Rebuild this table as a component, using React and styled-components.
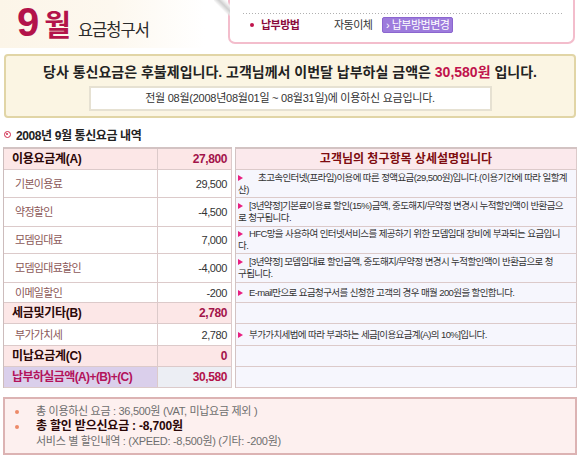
import React from 'react';
import styled, { createGlobalStyle } from 'styled-components';

const FONT = `"Liberation Sans", "Noto Sans CJK KR", sans-serif`;
const CRIMSON = '#b3134a';

const Global = createGlobalStyle`
  html, body { margin: 0; padding: 0; background: #fff; }
  body { font-family: ${FONT}; color: #333; }
  * { box-sizing: border-box; }
`;

const Page = styled.div`
  width: 580px;
  height: 460px;
  overflow: hidden;
`;

const TopBar = styled.header`
  display: flex;
  justify-content: space-between;
  align-items: flex-start;
  height: 48px;
`;

const TitleArea = styled.div`
  width: 205px;
  height: 48px;
  padding: 2px 0 0 17px;
  display: flex;
  align-items: baseline;
  background: linear-gradient(to right, #fcf5e8 0%, #fdf8ef 55%, #ffffff 100%);
`;

const MonthNum = styled.span`
  font-family: "Liberation Sans", sans-serif;
  font-weight: 700;
  font-size: 40px;
  line-height: 40px;
  color: ${CRIMSON};
`;

const MonthWord = styled.span`
  font-family: "Noto Sans CJK KR", sans-serif;
  font-weight: 700;
  font-size: 29px;
  line-height: 40px;
  color: ${CRIMSON};
  margin-left: 5px;
  letter-spacing: -1px;
`;

const TitleWord = styled.span`
  font-family: "Noto Sans CJK KR", sans-serif;
  font-size: 16.5px;
  line-height: 40px;
  color: #2a2a2a;
  margin-left: 8px;
  letter-spacing: -1px;
`;

const Card = styled.div`
  position: relative;
  width: 347px;
  height: 44px;
  margin-right: 5px;
  border: 2px solid #f3bdcc;
  border-top: none;
  border-radius: 0 0 7px 7px;
  background: #fff;
  padding: 13px 11px 0 13px;

  &::before {
    content: '';
    position: absolute;
    left: -16px;
    top: 0;
    width: 16px;
    height: 16px;
    background: linear-gradient(45deg, transparent 45%, #e6e6e6 55%, #cfcfcf 65%, #f2f2f2 80%, transparent 90%);
  }
`;

const DottedRule = styled.div`
  height: 1px;
  background: repeating-linear-gradient(to right, #b0b0b0 0 1px, transparent 1px 3px);
`;

const PayRow = styled.div`
  display: flex;
  align-items: center;
  height: 16px;
  margin-top: 3px;
  padding-left: 7px;
`;

const Dot = styled.span`
  width: 4px;
  height: 4px;
  border-radius: 50%;
  background: ${(p) => p.$color};
  flex: none;
`;

const PayLabel = styled.span`
  width: 73px;
  margin-left: 7px;
  font-size: 11px;
  font-weight: 700;
  letter-spacing: -0.5px;
  color: #8a0b3b;
  line-height: 16px;
`;

const PayValue = styled.span`
  width: 48px;
  font-size: 11px;
  letter-spacing: -0.5px;
  color: #333;
  line-height: 16px;
`;

const PayButton = styled.button`
  height: 16px;
  padding: 0 3px;
  border: 1px solid #8b66cf;
  border-radius: 2px;
  background: #9d7bdc;
  color: #fff;
  font-family: ${FONT};
  font-size: 11px;
  letter-spacing: -0.5px;
  line-height: 14px;
  cursor: pointer;
`;

const Notice = styled.section`
  margin: 6px 4px 0;
  border: 2px solid #e1d5a6;
  border-radius: 4px;
  background: #fbf5e3;
  padding: 6px 0 5px;
  text-align: center;
`;

const NoticeMain = styled.p`
  margin: 0;
  font-size: 14px;
  font-weight: 700;
  line-height: 20px;
  letter-spacing: 0;
  color: #222;
`;

const Amount = styled.span`
  color: #c0134c;
`;

const NoticeSub = styled.p`
  width: 403px;
  height: 25px;
  margin: 4px auto 0;
  border: 2px solid #e6e1d2;
  background: #fff;
  font-size: 11px;
  line-height: 21px;
  letter-spacing: -0.25px;
  color: #333;
`;

const SectionTitle = styled.h2`
  display: flex;
  align-items: center;
  height: 16px;
  margin: 8px 0 5px 4px;
  font-size: 12px;
  font-weight: 700;
  letter-spacing: -0.4px;
  color: #222;
`;

const TitleIcon = styled.span`
  position: relative;
  width: 7px;
  height: 7px;
  border: 1.5px solid #d12a4c;
  border-radius: 50%;
  margin-right: 5px;
  flex: none;

  &::after {
    content: '';
    position: absolute;
    left: 1px;
    top: 1px;
    width: 2px;
    height: 2px;
    border-radius: 50%;
    background: #d12a4c;
  }
`;

const Tables = styled.div`
  display: flex;
  gap: 3px;
  margin: 0 3px;
`;

const ROWS = '21px 28px 29px 27px 29px 20px 21px 22px 21px 21px';

const AmountGrid = styled.div`
  display: grid;
  grid-template-columns: 154px 74px;
  grid-template-rows: ${ROWS};
  border-top: 2px solid #d3c3c3;
  border-left: 1px solid #cdbcbc;
`;

const DescGrid = styled.div`
  flex: 1;
  display: grid;
  grid-template-columns: 1fr;
  grid-template-rows: ${ROWS};
  border-top: 2px solid #d3c3c3;
  border-left: 1px solid #d3c3c3;
`;

const labelStyles = {
  sum: `background:#fce7e7; color:#2c0808; font-size:12px; font-weight:700; padding-left:8px; letter-spacing:-0.3px;`,
  item: `background:#fff; color:#8c5858; font-size:11px; padding-left:11px; letter-spacing:-0.7px;`,
  total: `background:#dacfeb; color:#b3125a; font-size:12px; font-weight:700; padding-left:8px; letter-spacing:-0.6px;`,
};

const valueStyles = {
  sum: `background:#fce7e7; color:#a3144a; font-size:12px; font-weight:700;`,
  item: `background:#fff; color:#333; font-size:11px;`,
  total: `background:#eceef4; color:#b3124a; font-size:12px; font-weight:700;`,
};

const Cell = styled.div`
  display: flex;
  align-items: center;
  border-right: 1px solid #dccaca;
  border-bottom: 1px solid #dccaca;
  line-height: 14px;
  white-space: nowrap;
  overflow: hidden;
`;

const LabelCell = styled(Cell)`
  ${(p) => labelStyles[p.$kind]}
`;

const ValueCell = styled(Cell)`
  justify-content: flex-end;
  padding-right: 4px;
  letter-spacing: -0.4px;
  ${(p) => valueStyles[p.$kind]}
`;

const DescHead = styled(Cell)`
  justify-content: center;
  background: #fbe9ec;
  color: #7e0c10;
  font-size: 12px;
  font-weight: 700;
`;

const DescCell = styled.div`
  display: flex;
  flex-direction: column;
  justify-content: center;
  padding: 0 2px;
  background: #f6f6fd;
  border-right: 1px solid #d6c6c6;
  border-bottom: 1px solid #dccaca;
  font-size: 9.5px;
  line-height: 12px;
  letter-spacing: -0.6px;
  color: #333;
  white-space: nowrap;
  overflow: hidden;
`;

const DescLine = styled.span`
  display: flex;
  align-items: center;
`;

const Arrow = styled.span`
  width: 0;
  height: 0;
  border-left: 5px solid #e81f80;
  border-top: 3.5px solid transparent;
  border-bottom: 3.5px solid transparent;
  margin-right: ${(p) => (p.$wide ? 15 : 6)}px;
  flex: none;
`;

const Summary = styled.section`
  margin: 9px 3px 0;
  border: 2px solid #dcb3b3;
  background: #fdf0ef;
  padding: 5px 0 4px 10px;
`;

const SummaryLine = styled.div`
  display: flex;
  align-items: center;
  height: 15px;
  font-size: ${(p) => (p.$strong ? 12 : 11)}px;
  font-weight: ${(p) => (p.$strong ? 700 : 400)};
  color: ${(p) => (p.$strong ? '#2a0707' : '#6e6e6e')};
  letter-spacing: ${(p) => (p.$strong ? '-0.2px' : '-0.3px')};
  line-height: 15px;
  white-space: nowrap;
`;

const BulletSlot = styled.span`
  width: 21px;
  flex: none;
  display: flex;
  align-items: center;
`;

const rows = [
  { kind: 'sum', label: '이용요금계(A)', value: '27,800', head: true },
  {
    kind: 'item', label: '기본이용료', value: '29,500', wide: true,
    desc: ['초고속인터넷(프라임)이용에 따른 정액요금(29,500원)입니다.(이용기간에 따라 일할계', '산)'],
  },
  {
    kind: 'item', label: '약정할인', value: '-4,500',
    desc: ['[3년약정]기본료이용료 할인(15%)금액, 중도해지/무약정 변경시 누적할인액이 반환금으', '로 청구됩니다.'],
  },
  {
    kind: 'item', label: '모뎀임대료', value: '7,000',
    desc: ['HFC망을 사용하여 인터넷서비스를 제공하기 위한 모뎀임대 장비에 부과되는 요금입니', '다.'],
  },
  {
    kind: 'item', label: '모뎀임대료할인', value: '-4,000',
    desc: ['[3년약정] 모뎀임대료 할인금액, 중도해지/무약정 변경시 누적할인액이 반환금으로 청', '구됩니다.'],
  },
  {
    kind: 'item', label: '이메일할인', value: '-200',
    desc: ['E-mail만으로 요금청구서를 신청한 고객의 경우 매월 200원을 할인합니다.'],
  },
  { kind: 'sum', label: '세금및기타(B)', value: '2,780' },
  {
    kind: 'item', label: '부가가치세', value: '2,780',
    desc: ['부가가치세법에 따라 부과하는 세금[이용요금계(A)의 10%]입니다.'],
  },
  { kind: 'sum', label: '미납요금계(C)', value: '0' },
  { kind: 'total', label: '납부하실금액(A)+(B)+(C)', value: '30,580' },
];

export default function App() {
  return (
    <Page>
      <Global />
      <TopBar>
        <TitleArea>
          <MonthNum>9</MonthNum>
          <MonthWord>월</MonthWord>
          <TitleWord>요금청구서</TitleWord>
        </TitleArea>
        <Card>
          <DottedRule />
          <PayRow>
            <Dot $color="#c0144c" />
            <PayLabel>납부방법</PayLabel>
            <PayValue>자동이체</PayValue>
            <PayButton>› 납부방법변경</PayButton>
          </PayRow>
        </Card>
      </TopBar>

      <Notice>
        <NoticeMain>
          당사 통신요금은 후불제입니다. 고객님께서 이번달 납부하실 금액은 <Amount>30,580원</Amount> 입니다.
        </NoticeMain>
        <NoticeSub>전월 08월(2008년08월01일 ~ 08월31일)에 이용하신 요금입니다.</NoticeSub>
      </Notice>

      <SectionTitle>
        <TitleIcon />
        2008년 9월 통신요금 내역
      </SectionTitle>

      <Tables>
        <AmountGrid>
          {rows.map((r) => (
            <React.Fragment key={r.label}>
              <LabelCell $kind={r.kind}>{r.label}</LabelCell>
              <ValueCell $kind={r.kind}>{r.value}</ValueCell>
            </React.Fragment>
          ))}
        </AmountGrid>
        <DescGrid>
          {rows.map((r) =>
            r.head ? (
              <DescHead key={r.label}>고객님의 청구항목 상세설명입니다</DescHead>
            ) : (
              <DescCell key={r.label}>
                {r.desc &&
                  r.desc.map((line, i) => (
                    <DescLine key={i}>
                      {i === 0 && <Arrow $wide={r.wide} />}
                      {line}
                    </DescLine>
                  ))}
              </DescCell>
            )
          )}
        </DescGrid>
      </Tables>

      <Summary>
        <SummaryLine>
          <BulletSlot><Dot $color="#ec8a68" /></BulletSlot>
          총 이용하신 요금 : 36,500원 (VAT, 미납요금 제외 )
        </SummaryLine>
        <SummaryLine $strong>
          <BulletSlot><Dot $color="#ec8a68" /></BulletSlot>
          총 할인 받으신요금 : -8,700원
        </SummaryLine>
        <SummaryLine>
          <BulletSlot />
          서비스 별 할인내역 : (XPEED: -8,500원) (기타: -200원)
        </SummaryLine>
      </Summary>
    </Page>
  );
}
